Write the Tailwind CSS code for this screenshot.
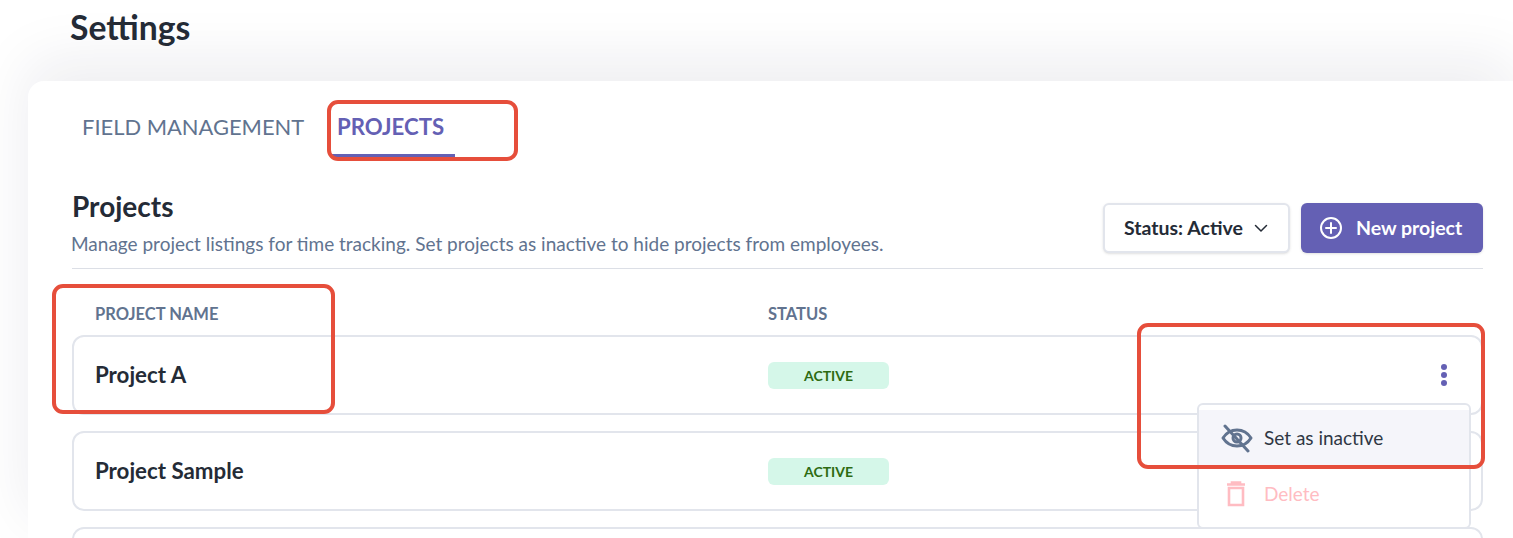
<!DOCTYPE html>
<html lang="en">
<head>
  <meta charset="UTF-8">
  <meta name="viewport" content="width=device-width, initial-scale=1.0">
  <title>Settings</title>
  <script src="https://cdn.jsdelivr.net/npm/@tailwindcss/browser@4"></script>
</head>
<body class="relative h-[538px] w-[1513px] overflow-hidden bg-white font-['Lato',sans-serif] text-[#242b36]">
  <h1 class="pl-[70px] pt-[7px] h-[81px] text-[33.7px] leading-[40px] font-bold">Settings</h1>

  <div class="ml-[28px] h-[457px] overflow-hidden rounded-tl-[16px] bg-white shadow-[0_-20px_60px_rgba(20,20,70,0.08)] pl-[44px] pr-[30px]">
    <!-- Tabs -->
    <div class="flex pt-[27px] h-[76px]">
      <div class="w-[258px] pl-[10px] text-[21.9px] leading-[38px] text-[#61738f]">FIELD MANAGEMENT</div>
      <div class="w-[125px] h-[49px] pl-[7px] border-b-[3px] border-[#6460b4] text-[22.2px] leading-[38px] font-bold text-[#6460b4]">PROJECTS</div>
    </div>

    <!-- Heading -->
    <div class="flex items-start justify-between h-[112px] border-b border-[#dcdfe6] pt-[33px]">
      <div>
        <h2 class="text-[28px] leading-[32px] font-bold">Projects</h2>
        <p class="-ml-[1px] mt-[10px] text-[19px] leading-[24px] text-[#61738f]">Manage project listings for time tracking. Set projects as inactive to hide projects from employees.</p>
      </div>
      <div class="flex gap-[11px] pt-[13px]">
        <button class="flex items-center h-[50px] w-[187px] pl-[19px] rounded-[6px] border-2 border-[#e2e5ec] bg-white shadow-sm text-[19.5px] font-bold">
          Status: Active
          <svg class="ml-[10px]" width="16" height="16" viewBox="0 0 16 16" fill="none" stroke="#242b36" stroke-width="1.5" stroke-linecap="round" stroke-linejoin="round"><path d="M2.500 5.500 8 11l5.500-5.500"/></svg>
        </button>
        <button class="flex items-center h-[50px] w-[182px] pl-[18px] rounded-[6px] bg-[#6460b4] shadow-sm text-[19.5px] font-bold text-white">
          <svg width="24" height="24" viewBox="0 0 24 24" fill="none" stroke="white" stroke-width="2" stroke-linecap="round"><circle cx="12" cy="12" r="10"/><path d="M12 7v10M7 12h10"/></svg>
          <span class="ml-[13px]">New project</span>
        </button>
      </div>
    </div>

    <!-- Table -->
    <div class="flex h-[66px] pl-[23px] pt-[33px] text-[16.5px] leading-[24px] font-bold text-[#61738f]">
      <div class="w-[673px]">PROJECT NAME</div>
      <div>STATUS</div>
    </div>
    <div class="flex flex-col gap-[16px]">
      <div class="flex items-center h-[80px] pl-[21px] pr-[34px] rounded-[12px] border-2 border-[#e2e5ec]">
        <div class="w-[673px] text-[22.3px] font-bold">Project A</div>
        <div class="flex items-center justify-center w-[121px] h-[27px] rounded-[6px] bg-[#d5f7e9] text-[14px] font-bold text-[#2e6b12]">ACTIVE</div>
        <div class="ml-auto flex flex-col gap-[2px]">
          <span class="w-[6px] h-[6px] rounded-full bg-[#6460b4]"></span>
          <span class="w-[6px] h-[6px] rounded-full bg-[#6460b4]"></span>
          <span class="w-[6px] h-[6px] rounded-full bg-[#6460b4]"></span>
        </div>
      </div>
      <div class="flex items-center h-[80px] pl-[21px] rounded-[12px] border-2 border-[#e2e5ec]">
        <div class="w-[673px] text-[22.3px] font-bold">Project Sample</div>
        <div class="flex items-center justify-center w-[121px] h-[27px] rounded-[6px] bg-[#d5f7e9] text-[14px] font-bold text-[#2e6b12]">ACTIVE</div>
      </div>
      <div class="h-[80px] rounded-[12px] border-2 border-[#e2e5ec]"></div>
    </div>
  </div>

  <!-- Row menu -->
  <div class="absolute left-[1197px] top-[403px] w-[274px] h-[126px] pt-[5px] rounded-[6px] border-2 border-[#e2e5ec] bg-white">
    <div class="flex items-center h-[56px] pl-[22px] bg-[#f5f5fa] text-[19px] text-[#2f3744]">
      <svg width="32" height="30" viewBox="0 0 32 30" fill="none" stroke="#61738f" stroke-width="3" stroke-linecap="round" stroke-linejoin="round">
        <path d="M2 15c3.500-5.500 8-8 14-8s10.500 2.500 14 8c-3.500 5.500-8 8-14 8s-10.500-2.500-14-8z"/>
        <circle cx="16" cy="15" r="4"/>
        <path d="M4 3l23 25"/>
      </svg>
      <span class="ml-[11px]">Set as inactive</span>
    </div>
    <div class="flex items-center h-[56px] pl-[27px] text-[19px] text-[#ffbcc2]">
      <svg width="20" height="26" viewBox="0 0 20 26" fill="none" stroke="#ffbcc2" stroke-width="2.6"><path d="M1 3.500h18M6 3.500V1.500h8v2M3 7h14v17H3z"/></svg>
      <span class="ml-[18px]">Delete</span>
    </div>
  </div>

  <!-- Red annotation boxes -->
  <div class="absolute left-[327px] top-[100px] w-[191px] h-[61px] rounded-[11px] border-4 border-[#e64e3b]"></div>
  <div class="absolute left-[52px] top-[284px] w-[283px] h-[130px] rounded-[11px] border-4 border-[#e64e3b]"></div>
  <div class="absolute left-[1137px] top-[323px] w-[348px] h-[146px] rounded-[11px] border-4 border-[#e64e3b]"></div>
</body>
</html>
